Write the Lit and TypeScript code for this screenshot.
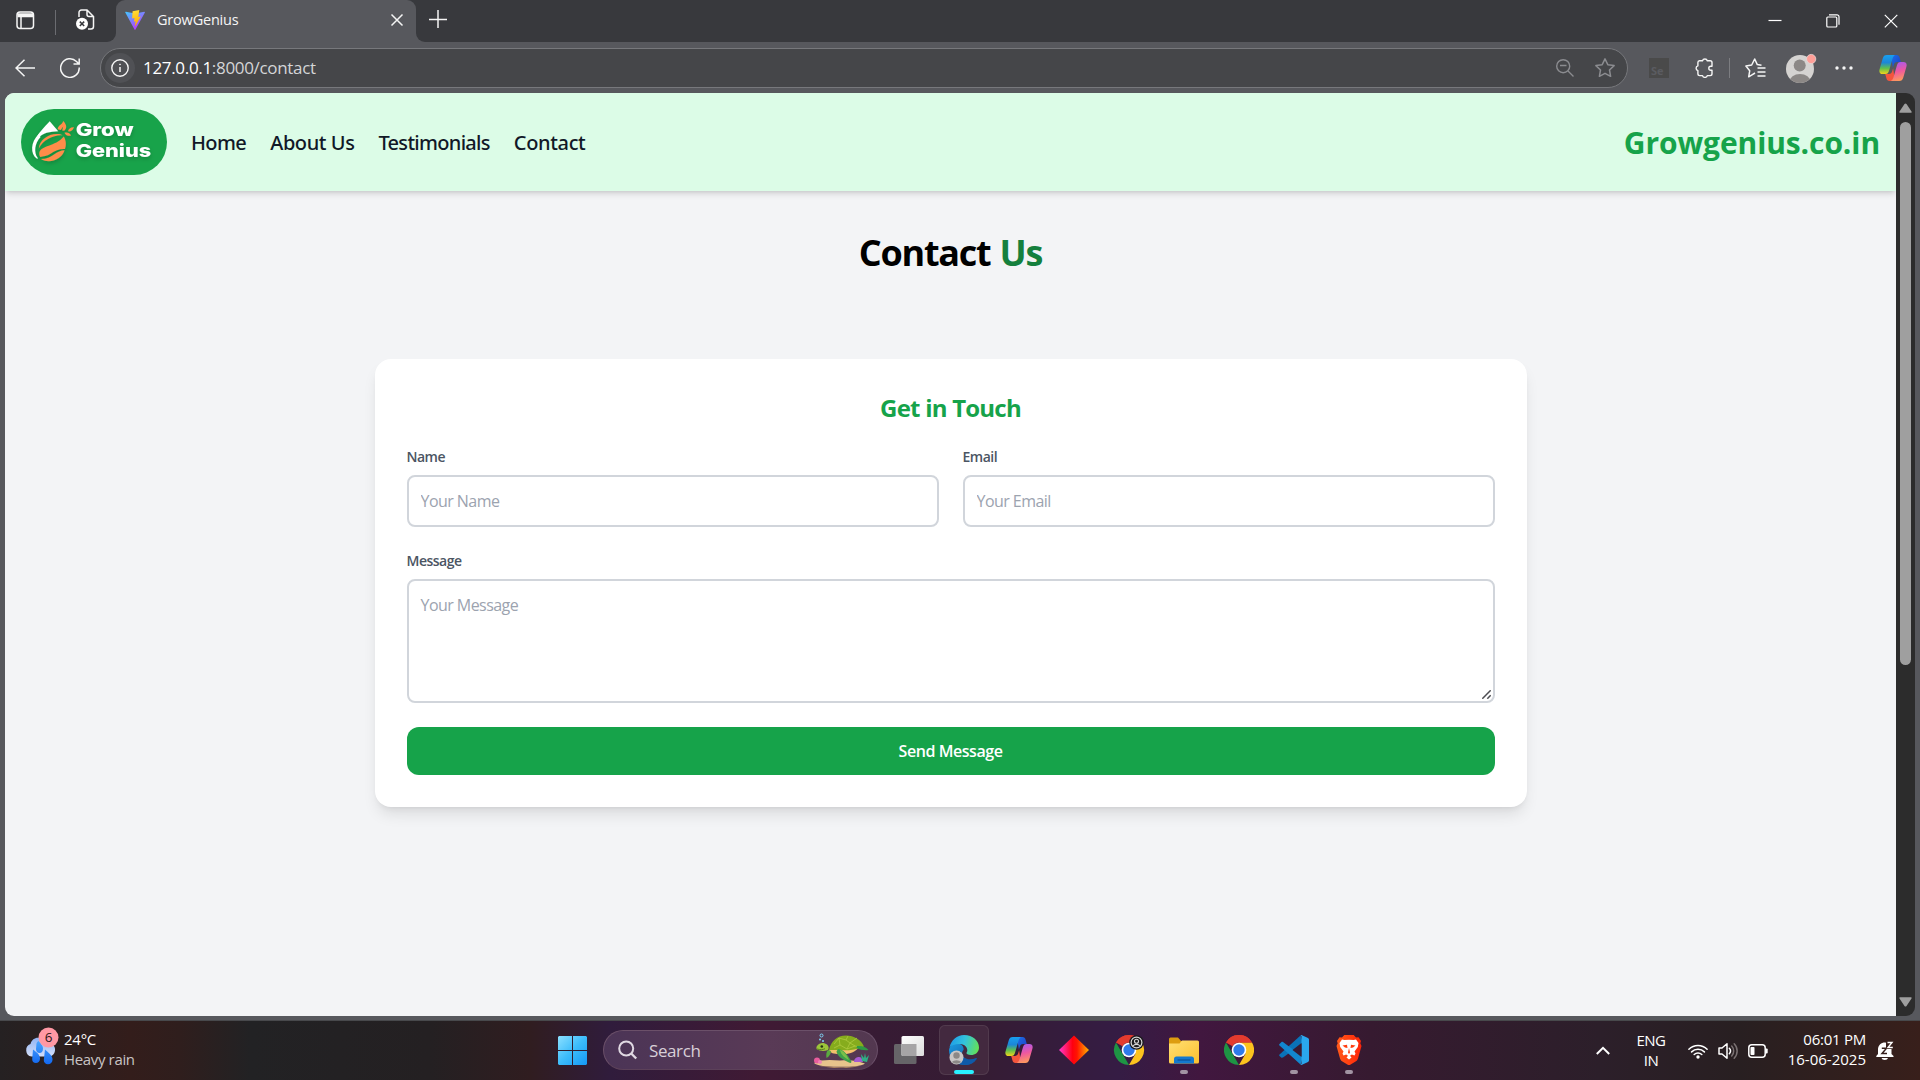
import { LitElement, html, css, svg } from "lit";
import { customElement } from "lit/decorators.js";

/* ---------- shared artwork ---------- */

const copilot = (size: number, id: string) => html`
  <svg width=${size} height=${size} viewBox="0 0 28 28">
    <defs>
      <linearGradient id="${id}a" x1="0" y1="0" x2="0" y2="1">
        <stop offset="0" stop-color="#18a0f0" /><stop offset=".4" stop-color="#1c86d8" />
        <stop offset=".7" stop-color="#5fc04c" /><stop offset="1" stop-color="#f2d31b" />
      </linearGradient>
      <linearGradient id="${id}b" x1=".3" y1="0" x2=".5" y2="1">
        <stop offset="0" stop-color="#a659f0" /><stop offset=".5" stop-color="#ee58a0" />
        <stop offset="1" stop-color="#ff9a5c" />
      </linearGradient>
      <linearGradient id="${id}c" x1="0" y1="0" x2="1" y2="1">
        <stop offset="0" stop-color="#1e6ee8" /><stop offset="1" stop-color="#1b3fc4" />
      </linearGradient>
    </defs>
    <path d="M12 1h5.500c1.800 0 2.600 1 3.100 2.700l1.200 4.300h-3.600c-2 0-2.900 1-3.500 3l-.8 2.800z" fill="url(#${id}c)" />
    <path d="M16 27h-5.500c-1.800 0-2.600-1-3.100-2.700L6.200 20h3.600c2 0 2.900-1 3.500-3l.8-2.800z" fill="#f4553d" />
    <path d="M7.800 1h8.400c-1.500.6-2.200 2-2.700 3.700l-3.400 11.800c-.7 2.400-1.600 3.500-3.700 3.500H3.600C.9 20-.2 18 .6 15.200L3.700 4.500C4.400 2.100 5.500 1 7.800 1z" fill="url(#${id}a)" />
    <path d="M20.200 27h-8.400c1.500-.6 2.200-2 2.700-3.700l3.400-11.800c.7-2.400 1.600-3.500 3.700-3.500h2.800c2.700 0 3.800 2 3 4.800l-3.100 10.700c-.7 2.400-1.800 3.500-4.100 3.500z" fill="url(#${id}b)" />
  </svg>`;

const chromeLogo = svg`
  <path d="M2 7.500A15 15 0 0 1 28 7.500H15z" fill="#e33b2e" />
  <path d="M2 7.500 8.500 18.800 15 30A15 15 0 0 1 2 7.500z" fill="#1e9444" />
  <path d="M28 7.500A15 15 0 0 1 15 30l6.500-11.200L15 7.500z" fill="#fcc31e" />
  <path d="M2 7.500A15 15 0 0 1 28 7.500H15a7.500 7.500 0 0 0-6.500 3.700z" fill="#e33b2e" />
  <circle cx="15" cy="15" r="7.300" fill="#fff" />
  <circle cx="15" cy="15" r="5.700" fill="#2f7bea" />`;

/* ---------- tab strip ---------- */

@customElement("tab-strip")
export class TabStrip extends LitElement {
  static styles = css`
    :host {
      display: flex;
      align-items: flex-start;
      height: 43px;
      background: #38393d;
      color: #f5f5f5;
      font-family: "Open Sans", "Liberation Sans", sans-serif;
    }
    svg { display: block; fill: none; flex: none; }
    .tools { display: flex; align-items: center; width: 116px; height: 42px; box-sizing: border-box; padding: 0 0 2px 16px; background: #38393d; border-bottom-right-radius: 9px; }
    .rule { width: 1px; height: 25px; margin: 4px 20px 0 20px; background: #6b6c71; }
    .under { background: #57585d; height: 43px; flex: none; }
    .under.grow { flex: 1; }
    .tab { display: flex; align-items: center; width: 300px; height: 43px; box-sizing: border-box; padding: 0 12px 3px 9px; background: #57585d; border-radius: 9px 9px 0 0; }
    .name { flex: 1; padding-left: 12px; font-size: 14.5px; letter-spacing: -0.2px; line-height: 20px; }
    .rest { display: flex; flex: 1; height: 42px; background: #38393d; border-bottom-left-radius: 9px; padding-left: 13px; align-items: flex-start; }
    .rest > svg:first-child { margin-top: 10px; }
    .controls { display: flex; margin-left: auto; padding: 14px 22px 0 0; gap: 44px; }
  `;
  render() {
    return html`
      <div class="under">
        <div class="tools">
          <svg width="19" height="19" viewBox="0 0 19 19" stroke="#f5f5f5" stroke-width="1.500">
            <rect x="1" y="1" width="16.500" height="16.500" rx="3" /><path d="M1.500 3.800h15.500M1.500 4.800h15.500" stroke-width="3" /><path d="M5 5v12" />
          </svg>
          <span class="rule"></span>
          <svg width="19" height="22" viewBox="0 0 19 22" stroke="#f5f5f5" stroke-width="1.500">
            <path d="M3 8V3.500A2.500 2.500 0 0 1 5.500 1H11l6.500 6.500v10A2.500 2.500 0 0 1 15 20h-3M11 1v4.500a2 2 0 0 0 2 2h4.500" />
            <circle cx="6" cy="14.800" r="6" fill="#fff" stroke="none" />
            <path d="m3.800 12.600 4.400 4.400m0-4.400L3.800 17" stroke="#38393d" />
          </svg>
        </div>
      </div>
      <div class="tab">
        <svg width="20" height="20" viewBox="0 0 20 20">
          <defs>
            <linearGradient id="va" x1="0" y1="0" x2=".6" y2="1"><stop stop-color="#41c8ff" /><stop offset="1" stop-color="#bd34fe" /></linearGradient>
            <linearGradient id="vb" x1=".3" y1="0" x2=".5" y2="1"><stop stop-color="#ffdf3a" /><stop offset="1" stop-color="#ffa800" /></linearGradient>
          </defs>
          <path d="m.3 2.600 9.200 17c.2.400.8.400 1 0L19.900 2.600c.2-.4-.2-.9-.6-.8L10 3.500.9 1.800c-.5-.1-.9.400-.6.800z" fill="url(#va)" />
          <path d="m14.300 0-6.700 1.300-.5 7.300 2.400-.5-.6 3.700 1.800-.5-.8 4.200c0 .4.400.5.600.2L15.800 6.500l-2.500.5z" fill="url(#vb)" />
        </svg>
        <span class="name">GrowGenius</span>
        <svg width="14" height="14" viewBox="0 0 14 14" stroke="#f5f5f5" stroke-width="1.500"><path d="m1.500 1.500 11 11m0-11-11 11" /></svg>
      </div>
      <div class="under grow">
        <div class="rest">
          <svg width="18" height="18" viewBox="0 0 18 18" stroke="#f5f5f5" stroke-width="1.500"><path d="M9 0v18M0 9.500h18" /></svg>
          <div class="controls">
            <svg width="14" height="14" viewBox="0 0 14 14" stroke="#fff" stroke-width="1.200"><path d="M.5 6.500h13" /></svg>
            <svg width="14" height="14" viewBox="0 0 14 14" stroke="#fff" stroke-width="1.200"><rect x=".8" y="3" width="10" height="10" rx="1" /><path d="M3 .8h8a2 2 0 0 1 2 2v8" /></svg>
            <svg width="14" height="14" viewBox="0 0 14 14" stroke="#fff" stroke-width="1.200"><path d="m.8.8 12.500 12.500m0-12.500L.8 13.300" /></svg>
          </div>
        </div>
      </div>
    `;
  }
}

/* ---------- toolbar ---------- */

@customElement("tool-bar")
export class ToolBar extends LitElement {
  static styles = css`
    :host {
      display: flex;
      align-items: center;
      height: 50px;
      background: #57585d;
      font-family: "Open Sans", "Liberation Sans", sans-serif;
    }
    svg { display: block; fill: none; flex: none; }
    .back { margin: 0 25px 0 15px; }
    .address { display: flex; align-items: center; width: 1528px; height: 40px; box-sizing: border-box; margin-left: 20px; padding: 0 12px 0 4px; border: 1px solid #77787c; border-radius: 20px; background: #454649; }
    .info { display: grid; place-items: center; width: 30px; height: 30px; border-radius: 50%; background: #505155; }
    .url { flex: 1; padding-left: 8px; color: #d4d5d7; font-size: 17px; letter-spacing: -0.32px; line-height: 24px; }
    .host { color: #fff; }
    .star { margin-left: 21px; }
    .ext { display: grid; place-items: end start; width: 20px; height: 20px; box-sizing: border-box; margin-left: 21px; padding-left: 2px; flex: none; background: #4a4a4a; color: #5b5c61; font-size: 11px; font-weight: 700; line-height: 14px; }
    .puzzle { margin-left: 25px; }
    .rule { width: 1px; height: 20px; margin: 0 15px 0 15px; background: #7c7d81; }
    .avatar { margin-left: 19px; }
    .dots { margin-left: 18px; }
    .copilot { margin-left: 26px; }
  `;
  render() {
    return html`
      <svg class="back" width="20" height="18" viewBox="0 0 20 18" stroke="#f5f5f5" stroke-width="1.500"><path d="M20 9H1M9.500.7 1 9l8.500 8.300" /></svg>
      <svg width="20" height="20" viewBox="0 0 20 20" stroke="#f5f5f5" stroke-width="1.500"><path d="M19.200 9.500A9.300 9.300 0 1 1 16.500 3.500L19 6M19.200.5V6h-5.700" /></svg>
      <div class="address">
        <span class="info">
          <svg width="18" height="18" viewBox="0 0 18 18" stroke="#f5f5f5" stroke-width="1.400"><circle cx="9" cy="9" r="8.200" /><path d="M9 8v5" stroke-width="1.500" /><circle cx="9" cy="5.400" r=".5" fill="#f5f5f5" stroke-width=".8" /></svg>
        </span>
        <span class="url"><span class="host">127.0.0.1</span>:8000/contact</span>
        <svg width="18" height="18" viewBox="0 0 18 18" stroke="#8b8c90" stroke-width="1.400"><circle cx="7.200" cy="7.200" r="6.500" /><path d="m12 12 5.500 5.500M4 6.500h6.500" /></svg>
        <svg class="star" width="20" height="20" viewBox="0 0 20 20" stroke="#8b8c90" stroke-width="1.500" stroke-linejoin="round"><path d="m10 .9 2.800 5.800 6.300.9-4.600 4.400 1.100 6.300L10 15.300l-5.600 3 1.100-6.300L.9 7.600l6.300-.9z" /></svg>
      </div>
      <span class="ext">Se</span>
      <svg class="puzzle" width="20" height="20" viewBox="0 0 20 20" stroke="#f5f5f5" stroke-width="1.400" stroke-linejoin="round">
        <path d="M5.500 2.800h3A2.500 2.500 0 0 1 13.300 2.800h2.900a1.800 1.800 0 0 1 1.800 1.800v3.600h-1.200a2 2 0 0 0 0 4H18v3.600a1.800 1.800 0 0 1-1.800 1.800h-2.900a2.500 2.500 0 0 1-4.800 0H5.700a1.800 1.800 0 0 1-1.800-1.800v-3.200a2.500 2.500 0 0 1 0-4.800V4.600a1.800 1.800 0 0 1 1.600-1.800z" />
      </svg>
      <span class="rule"></span>
      <svg width="21" height="20" viewBox="0 0 21 20" stroke="#f5f5f5" stroke-width="1.500" stroke-linejoin="round"><path d="M7 16.800 3.700 18.800l1-6L.9 8l5.800-1L9.700 1l2.600 5.600 4.200.6M12.500 10h8M12.500 14h8M12.500 18h8M7 16.800l3-1.800" /></svg>
      <svg class="avatar" width="32" height="32" viewBox="0 0 32 32">
        <defs><clipPath id="av"><circle cx="15" cy="17" r="14" /></clipPath></defs>
        <circle cx="15" cy="17" r="14" fill="#d5d3d1" />
        <g clip-path="url(#av)" fill="#8c8886"><circle cx="14.700" cy="13.500" r="6" /><ellipse cx="15" cy="30" rx="10.500" ry="8" /></g>
        <circle cx="26.200" cy="7" r="4.600" fill="#ff9f98" stroke="#e8d5d4" stroke-width=".8" />
      </svg>
      <svg class="dots" width="18" height="4" viewBox="0 0 18 4"><g fill="#f5f5f5"><circle cx="2" cy="2" r="1.700" /><circle cx="9" cy="2" r="1.700" /><circle cx="16" cy="2" r="1.700" /></g></svg>
      <span class="copilot">${copilot(28, "t")}</span>
    `;
  }
}

/* ---------- web page ---------- */

@customElement("contact-page")
export class ContactPage extends LitElement {
  static styles = css`
    :host {
      display: block;
      background: #f3f4f6;
      border-radius: 9px 0 0 9px;
      overflow: hidden;
      font-family: "Open Sans", "Liberation Sans", sans-serif;
    }
    nav { display: flex; align-items: center; height: 98px; box-sizing: border-box; padding: 16px; background: #dcfce7; box-shadow: 0 4px 6px -1px rgba(0, 0, 0, 0.12), 0 2px 4px -2px rgba(0, 0, 0, 0.12); }
    .logo { display: block; flex: none; }
    .links { display: flex; gap: 24px; margin-left: 24px; padding-top: 2px; color: #111827; font-family: "Noto Sans", "Open Sans", sans-serif; font-size: 20px; font-weight: 500; line-height: 28px; white-space: nowrap; }
    .home { letter-spacing: -0.6px; }
    .about { letter-spacing: -0.42px; }
    .testimonials { letter-spacing: -0.7px; }
    .contact { letter-spacing: -0.35px; }
    .site { margin-left: auto; padding-top: 2px; color: #16a34a; font-size: 30px; font-weight: 700; line-height: 36px; letter-spacing: -0.1px; }
    h1 { margin: 42px 0 86px; font-size: 36px; font-weight: 700; line-height: 40px; letter-spacing: -1.25px; word-spacing: 1px; text-align: center; color: #000; }
    h1 span { color: #15803d; }
    .card { width: 1152px; box-sizing: border-box; margin: 0 auto; padding: 33px 32px 32px; background: #fff; border-radius: 16px; box-shadow: 0 10px 15px -3px rgba(0, 0, 0, 0.1), 0 4px 6px -4px rgba(0, 0, 0, 0.1); }
    h2 { margin: 0 0 23px; color: #16a34a; font-size: 24px; font-weight: 700; line-height: 32px; letter-spacing: -0.78px; text-align: center; }
    form { display: grid; grid-template-columns: 1fr 1fr; gap: 24px; }
    label { display: flex; flex-direction: column; gap: 8px; color: #4b5563; font-size: 14px; font-weight: 600; line-height: 20px; letter-spacing: -0.5px; }
    .wide { grid-column: span 2; }
    .area { display: grid; }
    .area > * { grid-area: 1 / 1; }
    .grip { place-self: end; margin: 0 4px 4px 0; fill: none; }
    input, textarea { display: block; width: 100%; box-sizing: border-box; margin: 0; padding: 12px; border: 2px solid #d1d5db; border-radius: 8px; background: #fff; outline: none; font: 400 16px/24px "Open Sans", "Liberation Sans", sans-serif; letter-spacing: -0.55px; }
    input { height: 52px; }
    textarea { height: 124px; resize: none; }
    ::placeholder { color: #9ca3af; opacity: 1; }
    button { height: 48px; padding: 0; border: 0; border-radius: 12px; background: #16a34a; color: #fff; font: 600 16px/24px "Open Sans", "Liberation Sans", sans-serif; letter-spacing: -0.45px; }
  `;
  render() {
    return html`
      <nav>
        <svg class="logo" width="146" height="66" viewBox="0 0 146 66">
          <defs><filter id="sh" x="-10%" y="-10%" width="120%" height="140%"><feDropShadow dx="0" dy="2" stdDeviation="2" flood-opacity=".2" /></filter></defs>
          <rect width="146" height="66" rx="33" fill="#18a34a" />
          <g filter="url(#sh)">
            <path d="M28.700 12.300 37.200 22.300C29 22.500 21.500 24 17 29.500L14.500 31C16 25.500 23.500 18 28.700 12.300z" fill="#fff" />
            <path d="M17.800 25C9.500 33 9 45 16 49.800c.7.300.9-.5.600-1C12.800 43.500 13.500 34.500 19.500 28z" fill="#fff" />
            <path d="M17.800 39.500C18.500 30.500 28 24 38 25c1.500.2 2.800.8 3.500 1.500C34 25.500 22.500 30.500 17.800 39.500z" fill="#ff8c4a" />
            <path d="M18.300 43.800C20 36 34 38 42.800 27.500 45.300 31.500 45.300 36.500 44 40 39.500 39.500 34 41.500 29.500 44.800c-3.500 2.300-7.500 2.700-10.200 3.200-.9-1.200-1.200-2.800-1-4.200z" fill="#ff8c4a" />
            <path d="M20 50c5.500 0 9.500-1.800 13-4.500 3.500-2.600 7-4.300 10.600-4.300C40.500 51 28 55 20 50z" fill="#ff8c4a" />
            <path d="M42.200 12c3.600 3.500 4 7.300 1 9.800l-2-.2 1-4-2.500 3.300-3-.6c.3-4.300 4.500-4.300 5.500-8.300z" fill="#ff8c4a" />
            <path d="M53 18.200c-1.500 4-3.500 4.400-6 4.100.5-2.500 2.500-4.300 6-4.100zM43.500 23.800c2.500-.8 5.500 0 6.500 3-3 .3-5.300-.3-6.500-3z" fill="#ff8c4a" />
            <g fill="#fff" font-family="Inter, 'Liberation Sans', sans-serif" font-size="17.300" font-weight="800">
              <text x="54.700" y="27" textLength="58" lengthAdjust="spacingAndGlyphs">Grow</text>
              <text x="54.700" y="47.500" textLength="75.500" lengthAdjust="spacingAndGlyphs">Genius</text>
            </g>
          </g>
        </svg>
        <div class="links">
          <span class="home">Home</span><span class="about">About Us</span><span class="testimonials">Testimonials</span><span class="contact">Contact</span>
        </div>
        <span class="site">Growgenius.co.in</span>
      </nav>
      <h1>Contact <span>Us</span></h1>
      <section class="card">
        <h2>Get in Touch</h2>
        <form>
          <label>Name<input type="text" placeholder="Your Name" /></label>
          <label>Email<input type="email" placeholder="Your Email" /></label>
          <label class="wide">Message
            <span class="area">
              <textarea placeholder="Your Message"></textarea>
              <svg class="grip" width="9" height="9" viewBox="0 0 9 9" stroke="#4d4d52" stroke-width="1.500"><path d="M.3 8.700 8.700.3M5.300 8.700l3.400-3.400" /></svg>
            </span>
          </label>
          <button class="wide" type="button">Send Message</button>
        </form>
      </section>
    `;
  }
}

/* ---------- taskbar ---------- */

@customElement("task-bar")
export class TaskBar extends LitElement {
  static styles = css`
    :host {
      display: flex;
      height: 59px;
      background: linear-gradient(90deg, #252122 0, #331d1b 130px, #2f1e1d 180px, #222224 250px, #242022 430px, #301d20 530px, #301c3c 610px, #401a34 760px, #371b34 880px, #351c33 980px, #351c44 1120px, #41173f 1200px, #361a30 1370px, #2c1f2a 1600px, #281f21 1740px, #381f1b 1920px);
      color: #fff;
      font: 400 15px/20px "Open Sans", "Liberation Sans", sans-serif;
      letter-spacing: -0.25px;
    }
    svg { display: block; fill: none; flex: none; }
    .weather { display: flex; width: 545px; box-sizing: border-box; padding: 6px 0 0 23px; gap: 5px; }
    .weather > div { padding-top: 2px; }
    .muted { color: #c9c4c4; letter-spacing: -0.35px; }
    .start { display: grid; place-items: center; width: 55px; height: 59px; flex: none; }
    .search { display: flex; align-items: center; width: 275px; height: 40px; box-sizing: border-box; margin: 9px 3px 0 3px; padding: 0 8px 0 14px; border: 1px solid #6b5069; border-bottom-color: #5c4159; border-radius: 20px; background: linear-gradient(90deg, #4b3456, #593a56 60%, #533850); }
    .search span { flex: 1; padding: 1px 0 0 11px; color: #d8cfd8; font-size: 17px; letter-spacing: -0.4px; line-height: 24px; }
    .app { display: flex; flex-direction: column; align-items: center; width: 50px; height: 50px; margin: 4px 2.500px 0; box-sizing: border-box; flex: none; border-radius: 6px; }
    .app svg, .app .pic { margin-top: 10px; height: 30px; }
    .app .pic svg { margin-top: 1px; height: 28px; }
    .app .task { height: 28px; margin-top: 11px; }
    .app.active { background: #43293f; box-shadow: inset 0 0 0 1px #513a4d; }
    .dot { width: 8px; height: 4px; margin-top: 5px; border-radius: 2px; background: #a294a3; }
    .active .dot { width: 20px; background: #29f0ff; }
    .tray { display: flex; align-items: center; margin-left: auto; padding-right: 26px; }
    .lang { width: 40px; margin: 0 0 1px 21px; text-align: center; letter-spacing: -0.5px; }
    .wifi { margin-left: 17px; }
    .sound { margin-left: 10px; }
    .battery { margin-left: 10px; }
    .clock { width: 80px; margin: 0 10px 3px 18px; text-align: right; white-space: nowrap; }
    .clock .date { letter-spacing: 0; }
  `;

  private app(icon: unknown, running = false, active = false) {
    return html`<div class="app ${active ? "active" : ""}">${icon}${running ? html`<span class="dot"></span>` : ""}</div>`;
  }

  render() {
    const edge = html`<svg width="30" height="30" viewBox="0 0 30 30">
      <defs>
        <linearGradient id="ea" x1="0" y1=".3" x2="1" y2=".5"><stop stop-color="#1e9be8" /><stop offset=".5" stop-color="#33c3dc" /><stop offset="1" stop-color="#63e05a" /></linearGradient>
        <linearGradient id="eb" x1="0" y1="0" x2="1" y2="1"><stop stop-color="#1c9ce0" /><stop offset="1" stop-color="#0d4f9e" /></linearGradient>
      </defs>
      <path d="M0 15c1-6 7-8 11-6 3 1.500 4 4 3.500 6-3 3-1.500 9 4 11 3 1 6.500 1 9-1.500C24 29 19 30.500 14 30 6 29.500 0 23 0 15z" fill="url(#eb)" />
      <path d="M12 16c-.5 7 8 10.500 15 7 .8-.4 1.200.4.700 1C24 29 18 30.500 14 30c-7-4-6-12-2-14z" fill="#0f5aa8" />
      <path d="M.5 12.500C2 5 8 0 15 0c9 0 15 6 15 12.500 0 5-4 7.500-8 7.500-3 0-5-1-4.500-2.200 2-2 .5-8.300-6-8.800-5-.3-9 1-11 3.500z" fill="url(#ea)" />
      <circle cx="7.500" cy="22.500" r="7" fill="#c9c6c5" /><circle cx="7.500" cy="20.500" r="3.200" fill="#8c8886" /><path d="M2.800 27a5.500 3.600 0 0 1 9.400 0 7 7 0 0 1-9.400 0z" fill="#8c8886" />
    </svg>`;
    const chromeProfile = html`<svg width="30" height="30" viewBox="0 0 30 30" overflow="visible">${chromeLogo}
      <circle cx="22.500" cy="7.500" r="7.300" fill="#1b1b1d" /><circle cx="22.500" cy="7.500" r="5.400" stroke="#d8d8d8" stroke-width="1.200" /><circle cx="22.500" cy="6.300" r="2" stroke="#d8d8d8" stroke-width="1.100" /><path d="M19 11c1.500-2.200 5.500-2.200 7 0" stroke="#d8d8d8" stroke-width="1.100" /></svg>`;
    const chrome = html`<svg width="30" height="30" viewBox="0 0 30 30">${chromeLogo}</svg>`;
    const diamond = html`<svg width="30" height="30" viewBox="0 0 30 30"><defs><linearGradient id="dg"><stop stop-color="#ff3ad0" /><stop offset=".45" stop-color="#ff0010" /><stop offset=".6" stop-color="#ff1500" /><stop offset="1" stop-color="#ffb400" /></linearGradient></defs><path d="m15 .5 15 14.500-15 14.500L0 15z" fill="url(#dg)" /></svg>`;
    const folder = html`<svg width="30" height="30" viewBox="0 0 30 30"><defs><linearGradient id="fg" x1="0" y1="0" x2="1" y2="1"><stop stop-color="#ffdf73" /><stop offset="1" stop-color="#fbc02f" /></linearGradient></defs>
      <path d="M0 4a1.500 1.500 0 0 1 1.500-1.500H9L12 6h16.500L30 7.500V12H0z" fill="#dd9d10" /><path d="M0 8.500h10.500L13 5.500h15.500A1.500 1.500 0 0 1 30 7v20a1.500 1.500 0 0 1-1.500 1.500h-27A1.500 1.500 0 0 1 0 27z" fill="url(#fg)" />
      <path d="M5 28.500V24a2.500 2.500 0 0 1 2.500-2.500h15A2.500 2.500 0 0 1 25 24v4.500z" fill="#1479cf" /><path d="M8.500 25h13" stroke="#0b4f96" stroke-width="1.200" /></svg>`;
    const code = html`<svg width="30" height="30" viewBox="0 0 30 30">
      <path d="M21.500.5 24 8 4 22.500l-1.500.3L.5 21c-.5-.6-.4-1.200 0-1.600z" fill="#0a72b8" />
      <path d="M.5 10.500c-.5-.5-.5-1.200 0-1.600l2-1.800c.5-.4 1-.4 1.500 0L24 22l-2.500 7.500z" fill="#1287cf" />
      <path d="M21.500.2c.5-.2 1-.2 1.500 0l6 2.900c.6.300 1 .9 1 1.500v20.800c0 .6-.4 1.200-1 1.500l-6 2.900c-.6.300-1.200.2-1.700-.1L22.500 29V1z" fill="#2aa7ee" />
      <path d="m22.500 8-9 7 9 7z" fill="#371b34" /></svg>`;
    const brave = html`<svg width="26" height="30" viewBox="0 0 26 30"><defs><linearGradient id="bg"><stop stop-color="#ff5a1a" /><stop offset="1" stop-color="#ff2408" /></linearGradient></defs>
      <path d="M8.300 0h9.400L20 2.500l2.500-.3L25 6l-.7 2.200L25.500 11 22 23.500c-.4 1.300-1 2-2 2.800l-5.800 3.400c-.8.500-1.600.5-2.400 0L6 26.300c-1-.8-1.600-1.500-2-2.800L.5 11l1.200-2.800L1 6l2.500-3.800 2.500.3z" fill="url(#bg)" />
      <path d="M8.500 5 13 4.700l4.500.3L20 4.500 22.500 8l-.7 4-3.300 4.500 1 2-1 2-2.700-1-1.800 1.300 1.500 1.700-2.500 2-2.500-2 1.500-1.700-1.800-1.300-2.700 1-1-2 1-2L4.200 12l-.7-4L6 4.500z" fill="#fff" />
      <path d="m6.500 10.500 4.500-.8.500 3.300-2.500-.5zM19.500 10.500l-4.500-.8-.5 3.300 2.500-.5zM13 13l1 4.500L13 19l-1-1.500z" fill="#ff3d10" /></svg>`;
    const taskView = html`<svg class="task" width="30" height="28" viewBox="0 0 30 28"><defs><linearGradient id="tv" x1="0" y1="0" x2="1" y2="1"><stop stop-color="#fff" /><stop offset="1" stop-color="#dcdcdc" /></linearGradient></defs>
      <rect y="8" width="22.500" height="20" rx="1.500" fill="#666468" /><rect x="7.500" width="22.500" height="20" rx="1.500" fill="url(#tv)" /><path d="M7.500 8h15v12H9a1.500 1.500 0 0 1-1.500-1.500z" fill="#a6a4a6" /></svg>`;

    return html`
      <div class="weather">
        <svg width="36" height="38" viewBox="0 0 36 38">
          <defs>
            <linearGradient id="wc" x1="0" y1="0" x2="0" y2="1"><stop stop-color="#92b4f4" /><stop offset="1" stop-color="#d3def8" /></linearGradient>
            <linearGradient id="wd" x1="0" y1="0" x2="0" y2="1"><stop stop-color="#4aa4ff" /><stop offset="1" stop-color="#1268f0" /></linearGradient>
          </defs>
          <path d="M8.500 29.500a6.500 6.500 0 0 1-1-12.500C9 11.500 14 9.500 18 11.500c5 .5 8 3 8.500 5.500 4 .3 6 3 5.500 6.500-.5 4-3.500 6-6.500 6z" fill="url(#wc)" />
          <path d="M13.500 16.500C14 15 15 14 15.500 14c1 1.500 4.500 4 4.500 7.500 0 3-1.500 4.500-3.500 4.500s-3.500-1.500-3.500-4zM10 22.500c2.500 2 7.500 5 7 9.500-.2 2.500-2 4-4 4-2.300 0-4-1.500-3.800-4zM22 22.500c2.500 2.500 8 6 7.500 10.500-.2 2.500-2 4.300-4.500 4.300s-4.300-1.800-4.200-4.300z" fill="url(#wd)" />
          <circle cx="25.500" cy="10.500" r="10" fill="#ff98a4" />
          <text x="25.500" y="15.300" text-anchor="middle" font-size="13.500" fill="#2b1517" font-family="Open Sans">6</text>
        </svg>
        <div><div>24°C</div><div class="muted">Heavy rain</div></div>
      </div>
      <div class="start">
        <svg width="29" height="29" viewBox="0 0 29 29"><defs><linearGradient id="ws" gradientUnits="userSpaceOnUse" x1="0" y1="0" x2="29" y2="29"><stop stop-color="#8ce0ff" /><stop offset=".5" stop-color="#3cbcfb" /><stop offset="1" stop-color="#1498f5" /></linearGradient></defs>
          <path d="M1 0h13v14H0V1zM15 0h13l1 1v13H15zM0 15h14v14H1l-1-1zM15 15h14v13l-1 1H15z" fill="url(#ws)" /></svg>
      </div>
      <div class="search">
        <svg width="20" height="20" viewBox="0 0 20 20" stroke="#e0d8e2"><circle cx="8.200" cy="8.500" r="7" stroke-width="2" /><path d="m13.200 13.500 5 5" stroke-width="2.400" /></svg>
        <span>Search</span>
        <svg width="56" height="36" viewBox="0 0 56 36">
          <path d="M1 31c8-4 18-3 26-2.500 9-1 18 0 25 3-5 3.500-20 3.500-28 3.200C14 34.600 4 34 1 31z" fill="#e8c48c" />
          <path d="M7 34c10 1.500 32 1.800 41-.5-8 3-32 3-41 .5z" fill="#c89a63" />
          <path d="M16 18c8-1 20-1 30-3-4 6-12 8-20 7-5 0-9-1-10-4z" fill="#f3c06c" />
          <path d="M16 18c2-9 8-14.500 17-14.500 8 0 15 4 18 11-8 3.500-18 4.500-27 3.500z" fill="#86ac1d" />
          <path d="M21 12 26 6l7 2 2-4M26 6l1 7-6 3m6-3 7 4 8-3 5 1M33 8l4 3-3 6m3-6 7-5m-7 5 5 3" stroke="#b4d044" stroke-width=".7" />
          <path d="M44 14c5-.5 9 1 11.500 4-4 .5-8 0-12-2z" fill="#2f9a45" />
          <path d="M4 14c2-3.500 7-4 10-1.500 2 2 2 4 1 5.500-4 1.500-8 1-11-.5-.8-1-.8-2.500 0-3.500z" fill="#9cc43a" />
          <circle cx="8.800" cy="14.500" r="1.300" fill="#233216" /><path d="M4 17c3 1 6 .8 8-.3" stroke="#587f1f" />
          <path d="M25 17c6 1 9 5 13 11.500 1 2 0 3-2 2-7-3-12-7-12.500-11z" fill="#3fa04a" /><path d="M27 18c5 2 7 6 9 10-4-2-8-5-9-10z" fill="#7ac04a" />
          <path d="M15 18c-2 2-2 5-1.500 8 2-1 4.500-4 4.500-7z" fill="#5aab3f" />
          <circle cx="4" cy="28.500" r="3" fill="#e85d9e" /><circle cx="7" cy="30" r="2" fill="#f084b6" />
          <path d="M41 30c0-4 3-5 5-5s4 2 4 5z" fill="#a55ad0" />
          <path d="m49 29-1-7 3 4 1-5 1 5 3-3-2 7z" fill="#2fae84" />
          <circle cx="8.500" cy="3.500" r="1.500" stroke="#7fd3f5" /><circle cx="7" cy="7.500" r="1" fill="#7fd3f5" /><circle cx="10" cy="9" r="1" fill="#7fd3f5" />
        </svg>
      </div>
      ${this.app(taskView)}
      ${this.app(edge, true, true)}
      ${this.app(html`<span class="pic">${copilot(28, "k")}</span>`)}
      ${this.app(diamond)}
      ${this.app(chromeProfile)}
      ${this.app(folder, true)}
      ${this.app(chrome)}
      ${this.app(code, true)}
      ${this.app(brave, true)}
      <div class="tray">
        <svg width="14" height="9" viewBox="0 0 14 9" stroke="#fff" stroke-width="2"><path d="M.8 8 7 1.800 13.200 8" /></svg>
        <div class="lang">ENG<br />IN</div>
        <svg class="wifi" width="20" height="16" viewBox="0 0 20 16" stroke="#fff" stroke-width="1.500" stroke-linecap="round"><path d="M.9 6.200a12.800 12.800 0 0 1 18.200 0M3.600 8.900a9 9 0 0 1 12.800 0M6.200 11.500a5.400 5.400 0 0 1 7.600 0" /><circle cx="10" cy="14" r="1.700" fill="#fff" stroke="none" /></svg>
        <svg class="sound" width="20" height="18" viewBox="0 0 20 18" stroke="#fff" stroke-width="1.500" stroke-linecap="round" stroke-linejoin="round"><path d="M1 6h3l5-4.300v14.600L4 12H1zM11.300 6.300a4 4 0 0 1 0 5.400" /><path d="M13.700 4a7.300 7.300 0 0 1 0 10M16.200 1.800a10.300 10.300 0 0 1 0 14.400" stroke="#7a7172" /></svg>
        <svg class="battery" width="20" height="14" viewBox="0 0 20 14"><rect x=".8" y=".8" width="16.400" height="12.400" rx="3" stroke="#fff" stroke-width="1.500" /><rect x="2.500" y="3" width="4" height="8" rx=".8" fill="#fff" /><path d="M17.500 4.500h1.200a1 1 0 0 1 1 1v3a1 1 0 0 1-1 1h-1.200z" fill="#fff" /></svg>
        <div class="clock"><div>06:01 PM</div><div class="date">16-06-2025</div></div>
        <svg width="18" height="20" viewBox="0 0 18 20">
          <path d="M2 8C2.500 4 5 1.500 9 1.500S15.500 5 15.500 8v5l2 2v1H.3v-1L2 13z" fill="#fff" /><path d="M5.500 17h6.500a3.300 2.500 0 0 1-6.500 0z" fill="#fff" />
          <path d="M10 0h8v8h-8z" fill="#361f1c" />
          <path d="M5.800 7.200h4.700L6 12.500h5" stroke="#361f1c" stroke-width="1.500" /><path d="M11.500 1.500H16L12 6.500h4.800" stroke="#fff" stroke-width="1.400" />
        </svg>
      </div>
    `;
  }
}

/* ---------- desktop ---------- */

@customElement("app-root")
export class AppRoot extends LitElement {
  static styles = css`
    :host { display: flex; flex-direction: column; width: 1920px; height: 1080px; overflow: hidden; background: #57585d; }
    .view { display: flex; height: 923px; padding: 0 5px; flex: none; }
    contact-page { flex: 1; }
    .scroll { display: flex; flex-direction: column; align-items: center; width: 19px; box-sizing: border-box; padding: 10px 0 9px; background: #2c2c2c; border-radius: 0 9px 9px 0; }
    .scroll svg { display: block; flex: none; }
    .thumb { width: 11px; height: 543px; margin: 9px 0 auto; border-radius: 6px; background: #9f9f9f; }
    .edge { height: 5px; box-sizing: border-box; border-bottom: 1px solid #48494c; }
    tab-strip, tool-bar, task-bar { flex: none; }
  `;
  render() {
    return html`
      <tab-strip></tab-strip>
      <tool-bar></tool-bar>
      <div class="view">
        <contact-page></contact-page>
        <div class="scroll">
          <svg width="13" height="10" viewBox="0 0 13 10"><path d="M5.500 1c.6-.8 1.400-.8 2 0l5 7.500c.4.700.1 1.300-.8 1.300H1.300C.4 9.800.1 9.200.5 8.500z" fill="#9f9f9f" /></svg>
          <div class="thumb"></div>
          <svg width="13" height="10" viewBox="0 0 13 10"><path d="M5.500 9c.6.8 1.400.8 2 0l5-7.500c.4-.7.1-1.300-.8-1.300H1.300C.4.200.1.800.5 1.500z" fill="#9f9f9f" /></svg>
        </div>
      </div>
      <div class="edge"></div>
      <task-bar></task-bar>
    `;
  }
}
